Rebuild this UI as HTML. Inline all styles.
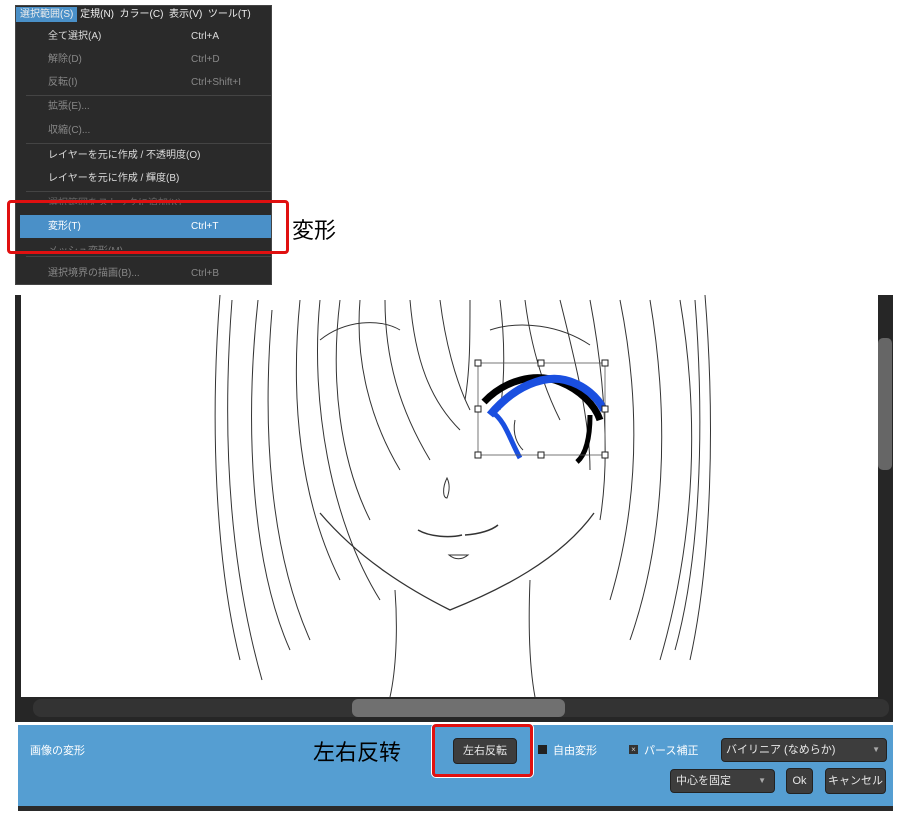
<!DOCTYPE html>
<html><head><meta charset="utf-8"><style>
*{margin:0;padding:0;box-sizing:border-box}
body{width:900px;height:819px;background:#fff;position:relative;overflow:hidden;font-family:"Liberation Sans","Noto Sans CJK JP",sans-serif}
.a{position:absolute}
.menu{left:15px;top:5px;width:257px;height:280px;background:#2a2a2a;border:1px solid #444}
.mi{position:absolute;left:32px;font-size:10px;line-height:14px;color:#ddd;white-space:nowrap}
.mi.g{color:#888}
.sc{position:absolute;left:175px;font-size:10px;line-height:14px;white-space:nowrap}
.sep{position:absolute;left:10px;width:245px;height:1px;background:#444}
.btn{position:absolute;background:#3d3d3d;border:1px solid #222;border-radius:4px;color:#e8e8e8;font-size:12px;line-height:22px;text-align:center;white-space:nowrap}
.wt{position:absolute;font-size:12px;color:#fff;white-space:nowrap}
</style></head><body>
<div class="a menu">
 <div class="a" style="left:0;top:0;width:255px;height:17px;background:#2a2a2a;font-size:10px;color:#eee;line-height:17px;white-space:nowrap;overflow:hidden">
  <span style="background:#4a90c8;padding:2px 4px">選択範囲(S)</span>&nbsp;定規(N)&nbsp;&nbsp;カラー(C)&nbsp;&nbsp;表示(V)&nbsp;&nbsp;ツール(T)</div>
 <div class="mi" style="top:24px">全て選択(A)</div><div class="sc" style="top:24px;color:#ddd">Ctrl+A</div>
 <div class="mi g" style="top:47px">解除(D)</div><div class="sc" style="top:47px;color:#888">Ctrl+D</div>
 <div class="mi g" style="top:70px">反転(I)</div><div class="sc" style="top:70px;color:#888">Ctrl+Shift+I</div>
 <div class="sep" style="top:89px"></div>
 <div class="mi g" style="top:94px">拡張(E)...</div>
 <div class="mi g" style="top:118px">収縮(C)...</div>
 <div class="sep" style="top:137px"></div>
 <div class="mi" style="top:143px">レイヤーを元に作成 / 不透明度(O)</div>
 <div class="mi" style="top:166px">レイヤーを元に作成 / 輝度(B)</div>
 <div class="sep" style="top:185px"></div>
 <div class="mi" style="top:191px;color:#666;height:8px;overflow:hidden">選択範囲をストックに追加(K)</div>
 <div class="a" style="left:4px;top:209px;width:251px;height:23px;background:#4a90c8"></div>
 <div class="mi" style="top:214px;color:#fff">変形(T)</div><div class="sc" style="top:214px;color:#fff">Ctrl+T</div>
 <div class="mi" style="top:239px;color:#777;height:5px;overflow:hidden">メッシュ変形(M)</div>
 <div class="sep" style="top:250px"></div>
 <div class="mi g" style="top:261px">選択境界の描画(B)...</div><div class="sc" style="top:261px;color:#888">Ctrl+B</div>
</div>
<div class="a" style="left:7px;top:200px;width:282px;height:54px;border:3px solid #e01010;border-radius:4px"></div>
<div class="a" style="left:292px;top:213px;font-size:22px;color:#000">変形</div>

<div class="a" style="left:15px;top:295px;width:878px;height:427px;background:#262626"></div>
<div class="a" style="left:21px;top:295px;width:857px;height:402px;background:#fff;overflow:hidden">
<svg width="857" height="402" viewBox="21 295 857 402" fill="none" stroke="#333" stroke-width="1">
<path d="M220 295 C210 420 215 560 240 660"/><path d="M232 300 C222 430 228 560 262 680"/>
<path d="M258 300 C245 420 250 560 290 650"/><path d="M272 310 C262 430 270 550 310 640"/>
<path d="M300 300 C290 400 300 500 340 580"/><path d="M320 300 C310 400 330 520 380 600"/>
<path d="M340 300 C330 380 340 460 370 520"/><path d="M360 300 C355 360 370 420 400 470"/>
<path d="M385 300 C385 360 400 410 430 460"/><path d="M410 300 C415 360 430 400 460 430"/>
<path d="M440 300 C445 340 455 380 470 410"/><path d="M470 300 C470 340 470 370 465 400"/>
<path d="M500 300 C505 340 505 380 500 410"/><path d="M525 300 C530 340 540 380 560 420"/>
<path d="M560 300 C575 360 590 420 590 470"/><path d="M590 300 C605 380 610 460 600 520"/>
<path d="M620 300 C640 400 640 500 610 600"/><path d="M650 300 C670 420 665 540 630 640"/>
<path d="M680 300 C700 420 695 540 660 660"/><path d="M705 295 C715 420 712 560 690 660"/>
<path d="M695 300 C705 430 700 560 675 650"/>
<path d="M320 513 C360 560 410 590 450 610 C500 590 560 560 594 513" stroke-width="1.3"/>
<path d="M395 590 C398 630 396 670 390 697"/><path d="M530 580 C528 630 530 670 535 697"/>
<path d="M418 530 C430 537 450 538 462 535 M465 535 C480 534 492 530 498 525" stroke-width="1.5"/>
<path d="M449 555 C455 560 462 560 468 555 Z"/>
<path d="M447 478 C442 488 443 498 447 498 C450 490 450 484 447 478 Z"/>
<path d="M320 340 C345 320 380 318 400 330"/><path d="M490 330 C520 320 560 325 590 345"/>
<path d="M484 402 C505 380 535 372 560 382 C580 390 595 405 600 420" stroke="#000" stroke-width="7"/>
<path d="M590 415 C590 440 585 455 577 462" stroke="#000" stroke-width="5"/>
<path d="M490 415 C515 385 545 375 565 380 C585 385 598 398 604 410" stroke="#1a4fe0" stroke-width="8"/>
<path d="M492 412 C505 420 510 440 520 458" stroke="#1a4fe0" stroke-width="5"/>
<path d="M515 420 C512 435 518 445 523 450"/>
<g stroke="#555" stroke-width="0.8"><rect x="478" y="363" width="127" height="92"/></g>
<g fill="#fff" stroke="#222" stroke-width="1">
<rect x="475" y="360" width="6" height="6"/><rect x="538" y="360" width="6" height="6"/><rect x="602" y="360" width="6" height="6"/>
<rect x="475" y="406" width="6" height="6"/><rect x="602" y="406" width="6" height="6"/>
<rect x="475" y="452" width="6" height="6"/><rect x="538" y="452" width="6" height="6"/><rect x="602" y="452" width="6" height="6"/></g>
</svg></div>
<div class="a" style="left:878px;top:338px;width:14px;height:132px;background:#666;border-radius:5px"></div>
<div class="a" style="left:33px;top:699px;width:856px;height:18px;background:#333;border-radius:8px"></div>
<div class="a" style="left:352px;top:699px;width:213px;height:18px;background:#707070;border-radius:6px"></div>

<div class="a" style="left:18px;top:725px;width:875px;height:81px;background:#559ed2"></div>
<div class="a" style="left:18px;top:806px;width:875px;height:5px;background:#2a2a2a"></div>
<div class="wt" style="left:30px;top:742px;font-size:11px">画像の変形</div>
<div class="a" style="left:313px;top:735px;font-size:22px;color:#000">左右反转</div>
<div class="a" style="left:432px;top:724px;width:101px;height:53px;border:3px solid #e01010;border-radius:4px;box-shadow:0 0 0 1px #fff"></div>
<div class="btn" style="left:453px;top:738px;width:64px;height:26px;line-height:24px;font-size:11px">左右反転</div>
<div class="a" style="left:538px;top:745px;width:9px;height:9px;background:#222"></div>
<div class="wt" style="left:553px;top:742px;font-size:11px">自由変形</div>
<div class="a" style="left:629px;top:745px;width:9px;height:9px;background:#333;color:#ccc;font-size:8px;line-height:9px;text-align:center">×</div>
<div class="wt" style="left:644px;top:742px;font-size:11px">パース補正</div>
<div class="btn" style="left:721px;top:738px;width:166px;height:24px;text-align:left;padding-left:4px;font-size:11px">バイリニア (なめらか)<span style="position:absolute;right:6px;font-size:8px;color:#aaa">▼</span></div>
<div class="btn" style="left:670px;top:769px;width:105px;height:24px;text-align:left;padding-left:5px;font-size:11px">中心を固定<span style="position:absolute;right:8px;font-size:8px;color:#aaa">▼</span></div>
<div class="btn" style="left:786px;top:768px;width:27px;height:26px;line-height:24px;font-size:11px">Ok</div>
<div class="btn" style="left:825px;top:768px;width:61px;height:26px;line-height:24px;font-size:11px">キャンセル</div>
</body></html>
